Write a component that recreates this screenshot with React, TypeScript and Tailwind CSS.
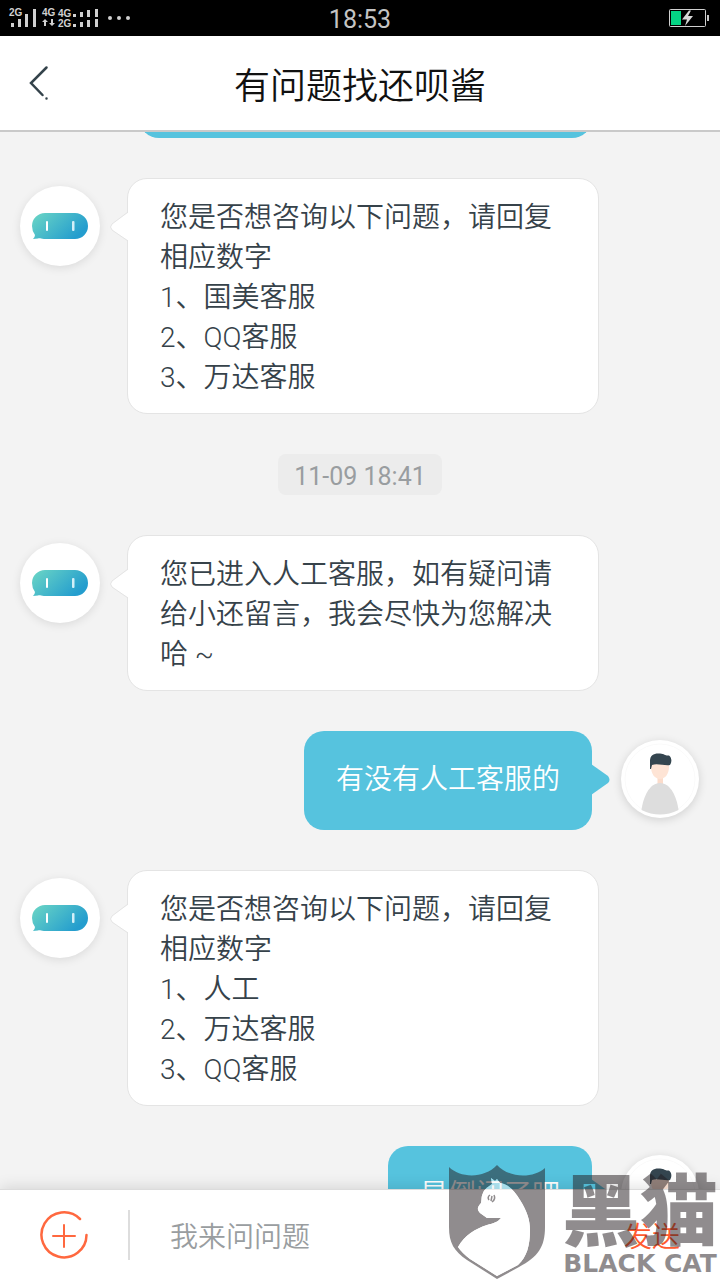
import React from "react"

interface Message {
  id: number;
  from: "bot" | "user";
  lines: string[];
}

const firstMessages: Message[] = [
  {
    id: 1,
    from: "bot",
    lines: ["您是否想咨询以下问题，请回复相应数字", "1、国美客服", "2、QQ客服", "3、万达客服"],
  },
]

const laterMessages: Message[] = [
  { id: 2, from: "bot", lines: ["您已进入人工客服，如有疑问请给小还留言，我会尽快为您解决哈 ~"] },
  { id: 3, from: "user", lines: ["有没有人工客服的"] },
  {
    id: 4,
    from: "bot",
    lines: ["您是否想咨询以下问题，请回复相应数字", "1、人工", "2、万达客服", "3、QQ客服"],
  },
  { id: 5, from: "user", lines: ["是倒闭了吧"] },
]

function SignalIcon() {
  return (
    <svg viewBox="0 0 132 36" className="h-9 w-[132px]" fill="#d0d0d0" role="img" aria-label="信号">
      <g fontFamily="Liberation Sans, sans-serif" fontSize="10" fontWeight="bold">
        <text x="9" y="16">2G</text>
        <text x="42" y="16">4G</text>
        <text x="58" y="17">4G</text>
        <text x="58" y="27">2G</text>
      </g>
      <path d="M11 23h3v4h-3zM18 19h3v8h-3zM25 14h3v13h-3zM33 9h3v18h-3z" />
      <path d="M45 19l3 3h-2v4h-2v-4h-2zM52 26l-3-3h2v-4h2v4h2z" />
      <path d="M73 14h3v3h-3zM80 12h3v5h-3zM87 10h3v7h-3zM95 9h3v8h-3z" />
      <path d="M73 24h3v3h-3zM80 22h3v5h-3zM87 20h3v7h-3zM95 19h3v8h-3z" />
      <circle cx="110" cy="18" r="2" />
      <circle cx="119" cy="18" r="2" />
      <circle cx="128" cy="18" r="2" />
    </svg>
  );
}

function BatteryIcon() {
  return (
    <svg viewBox="0 0 40 18" className="h-[18px] w-10" role="img" aria-label="充电中">
      <rect x="0.5" y="0.5" width="36" height="17" rx="1" fill="none" stroke="#d0d0d0" />
      <rect x="2" y="2" width="10" height="14" fill="#04d484" />
      <path d="M20 1.500l-7 9h5l-2 6.500 8-10h-5l3-5.500z" fill="#d8d8d8" />
      <rect x="38" y="6" width="2" height="6" fill="#c8c8c8" />
    </svg>
  );
}

function BotAvatar({ id }: { id: number }) {
  return (
    <div className="mt-2 flex size-20 shrink-0 items-center justify-center rounded-full bg-white shadow-[0_2px_10px_rgba(0,0,0,0.1)]">
      <svg viewBox="0 0 56 28" className="h-7 w-14">
        <defs>
          <linearGradient id={`bot-${id}`} x1="0" y1="0" x2="1" y2="0.5">
            <stop offset="0.1" stopColor="#65d1c6" />
            <stop offset="1" stopColor="#249dce" />
          </linearGradient>
        </defs>
        <path
          d="M13 1H43A13 13 0 0 1 43 27H12C9 27 8 26 6 26.500L1 27Q3 25 3 23Q0 19 0 14A13 13 0 0 1 13 1Z"
          fill={`url(#bot-${id})`}
        />
        <rect x="14" y="9" width="2" height="10" rx="1" fill="#fff" />
        <rect x="40" y="9" width="2.500" height="10" rx="1" fill="#d3eff8" />
      </svg>
    </div>
  );
}

function UserAvatar() {
  return (
    <div className="mt-2 flex size-20 shrink-0 items-center justify-center rounded-full">
      <svg viewBox="0 0 78 78" className="size-[78px] rounded-full bg-white shadow-[0_2px_10px_rgba(0,0,0,0.14)]">
        <circle cx="39" cy="39" r="35" fill="none" stroke="#fafafa" />
        <path d="M36.500 35h5.500v10h-5.500z" fill="#fbdccb" />
        <path d="M30 22h18v5c0 7-4 12-9 12s-9-5-9-12z" fill="#fee4d5" />
        <path d="M29 29V21C29 15 33 13 39 13.500C44 14 44 16 48 15.500C51 18 51 22 49 25C44 26 36 23 31 25L30 29Z" fill="#34454f" />
        <path d="M39 43C50 43 56 58 57.500 70Q39 79 20.500 70C22 58 28 43 39 43Z" fill="#dddddd" />
      </svg>
    </div>
  );
}

function MessageRow({ message }: { message: Message }) {
  if (message.from === "user") {
    return (
      <div className="flex items-start justify-end pr-5">
        <div className="relative mr-7 rounded-[20px] bg-[#56c3de] px-8 pt-[29px] pb-[30px] text-white">
          {message.lines.map(line => (
            <p key={line}>{line}</p>
          ))}
          <svg viewBox="0 0 19 32" className="absolute top-[33px] -right-[18px] h-8 w-[19px]">
            <path d="M0 0L17 12Q20 16 17 19L0 31Z" fill="#56c3de" />
          </svg>
        </div>
        <UserAvatar />
      </div>
    );
  }

  return (
    <div className="flex items-start pl-5">
      <BotAvatar id={message.id} />
      <div className="relative ml-[27px] w-[472px] rounded-[20px] border border-[#e4e4e4] bg-white px-8 pt-[19px] pb-[15px] text-[#36424a]">
        {message.lines.map(line => (
          <p key={line}>{line}</p>
        ))}
        <svg viewBox="0 0 19 32" className="absolute top-8 -left-[18px] h-8 w-[19px]">
          <path d="M19 1L2 13Q-1 16 2 19L19 30Z" fill="#fff" />
          <path d="M18 1L2 13Q-1 16 2 19L18 30" fill="none" stroke="#e4e4e4" />
        </svg>
      </div>
    </div>
  );
}

const shieldPath = "M1 2C12 13 36 14 49 0C62 14 86 13 97 3V62C97 82 90 92 71 102L49 114L19 95C6 86 1 78 1 62Z"
const catPath =
  "M10 82C17 70 27 64 39 60C46 58 50 57 53 53L39 53L32 48C29 44 29 43 33 38C34 34 33 32 35 28C36 25 38 23 44 19L43 13L47 16L49 14L52 18C60 19 66 25 72 35C79 46 82 55 82 65C82 80 79 92 70 100L49 111L22 94Q14 88 10 82Z"

function Watermark() {
  return (
    <div className="pointer-events-none absolute right-0.5 bottom-0 flex items-end gap-4 text-[#231c1f] opacity-50">
      <svg viewBox="0 0 98 115" className="h-[115px] w-[98px]">
        <path fillRule="evenodd" fill="currentColor" d={shieldPath + catPath} />
        <path fill="#fff" d={catPath} />
        <path d="M41 35q-2-3 1-5M46 30q2 4-2 7M44 31l-1 5" fill="none" stroke="currentColor" strokeWidth="1.500" />
      </svg>
      <div className="flex flex-col items-center">
        <span className="font-['Noto_Sans_CJK_SC',sans-serif] text-[78px] leading-[84px] font-black">黑猫</span>
        <span className="font-['DejaVu_Sans',sans-serif] text-[25px] leading-8 font-bold whitespace-nowrap">BLACK CAT</span>
      </div>
    </div>
  );
}

export default function App() {
  return (
    <div className="flex h-screen flex-col overflow-hidden bg-[#f3f3f3] font-['Noto_Sans_CJK_SC',sans-serif] font-[350]">
      <div className="grid h-9 shrink-0 grid-cols-3 items-center bg-black">
        <SignalIcon />
        <span className="pt-1 text-center font-['Roboto',sans-serif] text-[25px] leading-8 font-normal text-[#c4c4c4]">18:53</span>
        <div className="flex justify-end pr-[11px]">
          <BatteryIcon />
        </div>
      </div>

      <header className="grid h-24 shrink-0 grid-cols-[80px_1fr_80px] items-center border-b-2 border-[#c9c9c9] bg-white">
        <button aria-label="返回" className="pl-7">
          <svg viewBox="0 0 22 36" className="h-9 w-[22px]" fill="none" stroke="#34434b" strokeWidth="2.500" strokeLinecap="round">
            <path d="M18.500 2.500L3 18L14.500 30M18.500 33.500v.1" />
          </svg>
        </button>
        <h1 className="text-center text-4xl text-[#111]">有问题找还呗酱</h1>
      </header>

      <main className="flex min-h-0 flex-1 flex-col overflow-hidden font-['Roboto','Noto_Sans_CJK_SC',sans-serif] text-[28px] leading-10">
        {/* tail of the previous message, scrolled under the header */}
        <div className="mr-32 ml-[139px] flex h-1.5 shrink-0 items-end overflow-hidden">
          <div className="h-20 flex-1 rounded-[20px] bg-[#56c3de]" />
        </div>
        <div className="flex flex-col gap-10 pt-10">
          {firstMessages.map(message => (
            <MessageRow key={message.id} message={message} />
          ))}
          <time className="self-center rounded-lg bg-[#ececec] px-4 pt-1 text-[25px] leading-[37px] font-normal text-[#999da0]">11-09 18:41</time>
          {laterMessages.map(message => (
            <MessageRow key={message.id} message={message} />
          ))}
        </div>
      </main>

      <form
        className="relative flex h-[91px] shrink-0 items-center border-t border-[#dcdcdc] bg-white shadow-[0_-2px_14px_rgba(0,0,0,0.12)]"
        onSubmit={event => event.preventDefault()}
      >
        <button type="button" aria-label="更多" className="px-10">
          <svg viewBox="0 0 48 48" className="size-12" fill="none" stroke="#ff683f" strokeLinecap="round">
            <path d="M40 8A22.500 22.500 0 1 0 46.500 24" strokeWidth="2.500" />
            <path d="M13 25H35M24 14V36" strokeWidth="2" />
          </svg>
        </button>
        <div className="h-[50px] w-0.5 bg-[#ddd]" />
        <input
          aria-label="消息"
          placeholder="我来问问题"
          className="min-w-0 flex-1 pl-10 text-[28px] outline-none placeholder:text-[#999da0]"
        />
        <button type="submit" className="px-10 text-[28px] text-[#ff5a30]">发送</button>
        <Watermark />
      </form>
    </div>
  );
}
